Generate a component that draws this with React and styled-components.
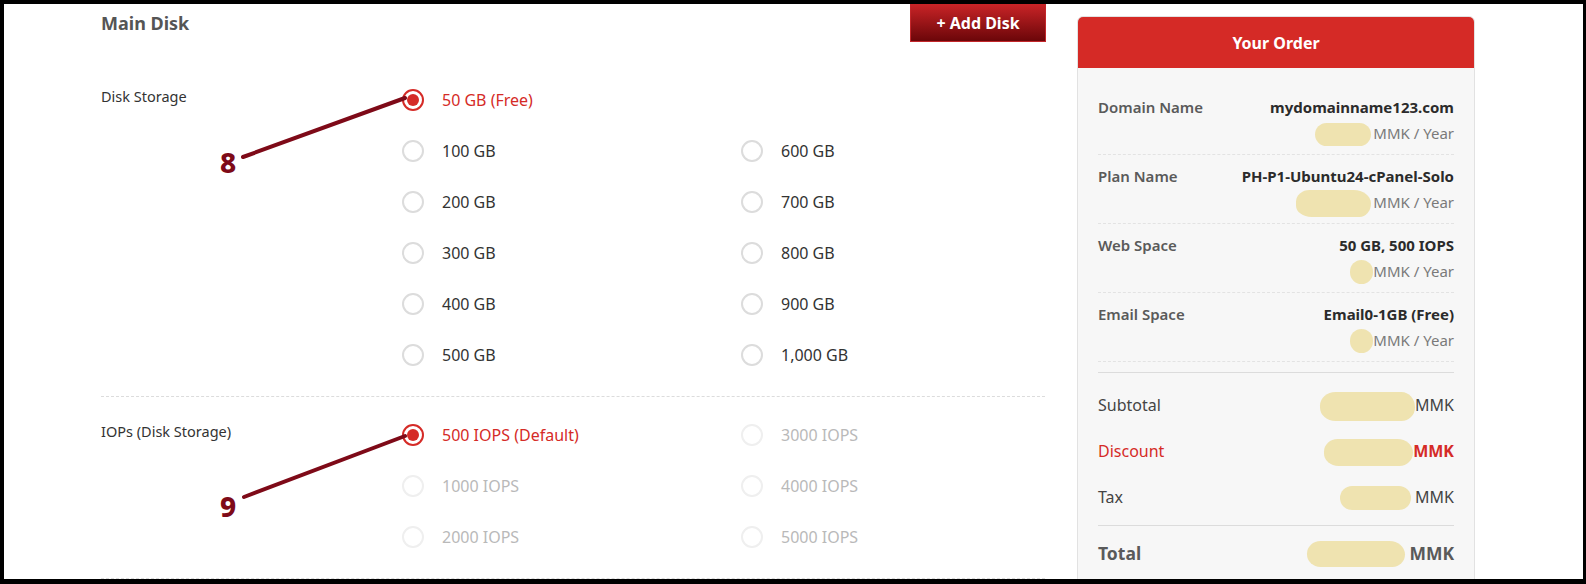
import React from "react";
import styled, { createGlobalStyle } from "styled-components";

const GlobalStyle = createGlobalStyle`
  html, body {
    margin: 0;
    padding: 0;
    background: #fff;
  }
  body {
    font-family: "Noto Sans", "Open Sans", Arial, sans-serif;
    color: #333;
  }
  * { box-sizing: border-box; }
`;

const Frame = styled.div`
  position: relative;
  width: 1586px;
  height: 584px;
  overflow: hidden;
  border-style: solid;
  border-color: #000;
  border-width: 4px 3px 5px 4px;
  background: #fff;
  display: flex;
  align-items: flex-start;
  gap: 32px;
  padding-left: 97px;
`;

const MainColumn = styled.div`
  width: 944px;
  flex: none;
`;

const HeaderRow = styled.div`
  height: 38px;
  margin-bottom: 20px;
  display: flex;
  align-items: center;
  justify-content: space-between;
`;

const Title = styled.h2`
  margin: 0;
  font-size: 18px;
  font-weight: 700;
  color: #555;
  line-height: 24px;
`;

const AddButton = styled.button`
  height: 38px;
  width: 136px;
  margin-right: -1px;
  border: 1px solid #c3262a;
  border-top: none;
  background: linear-gradient(#c92427, #6b0609);
  color: #fff;
  font-family: inherit;
  font-size: 16px;
  font-weight: 700;
  cursor: pointer;
`;

const Section = styled.div`
  display: flex;
  padding: 12px 0 16px;
  border-bottom: 1px dashed #dcdcdc;
`;

const FieldLabel = styled.div`
  width: 301px;
  flex: none;
  padding-top: 11px;
  font-size: 14.5px;
  line-height: 22px;
  color: #333;
`;

const OptionGrid = styled.div`
  flex: 1;
  display: grid;
  grid-template-columns: 339px 1fr;
  grid-auto-rows: 51px;
`;

const Option = styled.label`
  display: flex;
  align-items: center;
  gap: 18px;
  font-size: 16px;
  color: ${(p) => (p.$checked ? "#d52b27" : p.$disabled ? "#b9b9b9" : "#333")};
  cursor: ${(p) => (p.$disabled ? "default" : "pointer")};
`;

const RadioRing = styled.span`
  width: 22px;
  height: 22px;
  flex: none;
  border-radius: 50%;
  border: 2px solid
    ${(p) => (p.$checked ? "#d52b27" : p.$disabled ? "#efefef" : "#dcdcdc")};
  display: flex;
  align-items: center;
  justify-content: center;
  background: #fff;
  &::after {
    content: "";
    width: 12px;
    height: 12px;
    border-radius: 50%;
    background: ${(p) => (p.$checked ? "#d52b27" : "transparent")};
  }
`;

const Card = styled.aside`
  width: 398px;
  flex: none;
  margin-top: 12px;
  border: 1px solid #e2e2e2;
  border-radius: 6px;
  overflow: hidden;
  background: #f7f7f7;
  min-height: 600px;
`;

const CardHeader = styled.div`
  height: 51px;
  background: #d52a26;
  color: #fff;
  font-size: 16px;
  font-weight: 700;
  display: flex;
  align-items: center;
  justify-content: center;
`;

const CardBody = styled.div`
  padding: 18px 20px 0;
`;

const ItemRow = styled.div`
  display: flex;
  justify-content: space-between;
  padding: 10px 0;
  border-bottom: 1px dashed #e3e3e3;
`;

const ItemLabel = styled.div`
  font-size: 15px;
  font-weight: 600;
  color: #5a5a5a;
  line-height: 22px;
`;

const ItemValues = styled.div`
  display: flex;
  flex-direction: column;
  align-items: flex-end;
  gap: 4px;
`;

const ItemValue = styled.div`
  font-size: 15px;
  font-weight: 700;
  color: #2b2b2b;
  line-height: 22px;
`;

const ItemPrice = styled.div`
  height: 22px;
  display: flex;
  align-items: center;
  font-size: 15px;
  color: #7a7a7a;
  line-height: 22px;
`;

const Blob = styled.span`
  display: inline-block;
  flex: none;
  width: ${(p) => p.$w}px;
  height: ${(p) => p.$h}px;
  margin: -8px ${(p) => p.$gap ?? 2}px -8px 0;
  border-radius: ${(p) => p.$radius || "999px"};
  background: #efe3b0;
  transform: translateY(${(p) => p.$dy ?? 1}px);
`;

const Summary = styled.div`
  margin-top: 10px;
  border-top: 1px solid #dcdcdc;
  padding: 9px 0 5px;
`;

const SummaryRow = styled.div`
  height: 46px;
  display: flex;
  align-items: center;
  justify-content: space-between;
  font-size: 16px;
  color: ${(p) => (p.$accent ? "#d52b27" : "#444")};
`;

const Amount = styled.div`
  height: 24px;
  display: flex;
  align-items: center;
  font-weight: ${(p) => (p.$bold ? 700 : 400)};
`;

const TotalRow = styled.div`
  border-top: 1px solid #dcdcdc;
  padding: 15px 0;
  display: flex;
  align-items: center;
  justify-content: space-between;
  font-size: 17.5px;
  font-weight: 700;
  color: #5a5a5a;
  line-height: 24px;
`;

/* callout arrows drawn over the form */
const CalloutLayer = styled.svg`
  position: absolute;
  left: -4px;
  top: -4px;
  width: 1586px;
  height: 584px;
  pointer-events: none;
`;

const CalloutNumber = styled.span`
  position: absolute;
  left: ${(p) => p.$x}px;
  top: ${(p) => p.$y}px;
  font-family: "Noto Sans", Arial, sans-serif;
  font-size: 28px;
  font-weight: 800;
  line-height: 28px;
  color: #7e0a18;
`;

const diskRows = [
  [{ label: "50 GB (Free)", checked: true }, null],
  [{ label: "100 GB" }, { label: "600 GB" }],
  [{ label: "200 GB" }, { label: "700 GB" }],
  [{ label: "300 GB" }, { label: "800 GB" }],
  [{ label: "400 GB" }, { label: "900 GB" }],
  [{ label: "500 GB" }, { label: "1,000 GB" }],
];

const iopsRows = [
  [{ label: "500 IOPS (Default)", checked: true }, { label: "3000 IOPS", disabled: true }],
  [{ label: "1000 IOPS", disabled: true }, { label: "4000 IOPS", disabled: true }],
  [{ label: "2000 IOPS", disabled: true }, { label: "5000 IOPS", disabled: true }],
];

const orderItems = [
  { label: "Domain Name", value: "mydomainname123.com", blob: { w: 56, h: 23 } },
  { label: "Plan Name", value: "PH-P1-Ubuntu24-cPanel-Solo", blob: { w: 75, h: 27, radius: "14px 18px 12px 16px / 12px 14px 14px 12px" } },
  { label: "Web Space", value: "50 GB, 500 IOPS", blob: { w: 23, h: 24, gap: 0 } },
  { label: "Email Space", value: "Email0-1GB (Free)", blob: { w: 23, h: 24, gap: 0 } },
];

function RadioOption({ option }) {
  if (!option) return <span />;
  return (
    <Option $checked={option.checked} $disabled={option.disabled}>
      <RadioRing $checked={option.checked} $disabled={option.disabled} />
      {option.label}
    </Option>
  );
}

function OptionSection({ label, rows }) {
  return (
    <Section>
      <FieldLabel>{label}</FieldLabel>
      <OptionGrid>
        {rows.flatMap((row, i) =>
          row.map((opt, j) => <RadioOption key={`${i}-${j}`} option={opt} />)
        )}
      </OptionGrid>
    </Section>
  );
}

export default function App() {
  return (
    <>
      <GlobalStyle />
      <Frame>
        <MainColumn>
          <HeaderRow>
            <Title>Main Disk</Title>
            <AddButton>+ Add Disk</AddButton>
          </HeaderRow>
          <OptionSection label="Disk Storage" rows={diskRows} />
          <OptionSection label="IOPs (Disk Storage)" rows={iopsRows} />
        </MainColumn>

        <Card>
          <CardHeader>Your Order</CardHeader>
          <CardBody>
            {orderItems.map((item) => (
              <ItemRow key={item.label}>
                <ItemLabel>{item.label}</ItemLabel>
                <ItemValues>
                  <ItemValue>{item.value}</ItemValue>
                  <ItemPrice>
                    <Blob $w={item.blob.w} $h={item.blob.h} $radius={item.blob.radius} $gap={item.blob.gap} />
                    MMK / Year
                  </ItemPrice>
                </ItemValues>
              </ItemRow>
            ))}
            <Summary>
              <SummaryRow>
                Subtotal
                <Amount>
                  <Blob $w={95} $h={29} $gap={0} $radius="16px 14px 14px 16px / 14px 16px 14px 14px" />
                  MMK
                </Amount>
              </SummaryRow>
              <SummaryRow $accent>
                Discount
                <Amount $bold>
                  <Blob $w={89} $h={27} $gap={0} $radius="14px 16px 14px 15px / 13px 14px 14px 13px" />
                  MMK
                </Amount>
              </SummaryRow>
              <SummaryRow>
                Tax
                <Amount>
                  <Blob $w={71} $h={24} $gap={4} />
                  MMK
                </Amount>
              </SummaryRow>
            </Summary>
            <TotalRow>
              Total
              <Amount $bold>
                <Blob $w={98} $h={26} $gap={4} $radius="14px 16px 13px 14px / 13px 14px 13px 13px" />
                MMK
              </Amount>
            </TotalRow>
          </CardBody>
        </Card>

        <CalloutLayer viewBox="0 0 1586 584">
          <line x1="243" y1="157" x2="405" y2="98" stroke="#7e0a18" strokeWidth="4" strokeLinecap="round" />
          <line x1="244" y1="497" x2="405" y2="436" stroke="#7e0a18" strokeWidth="4" strokeLinecap="round" />
        </CalloutLayer>
        <CalloutNumber $x={216} $y={144}>8</CalloutNumber>
        <CalloutNumber $x={216} $y={488}>9</CalloutNumber>
      </Frame>
    </>
  );
}
